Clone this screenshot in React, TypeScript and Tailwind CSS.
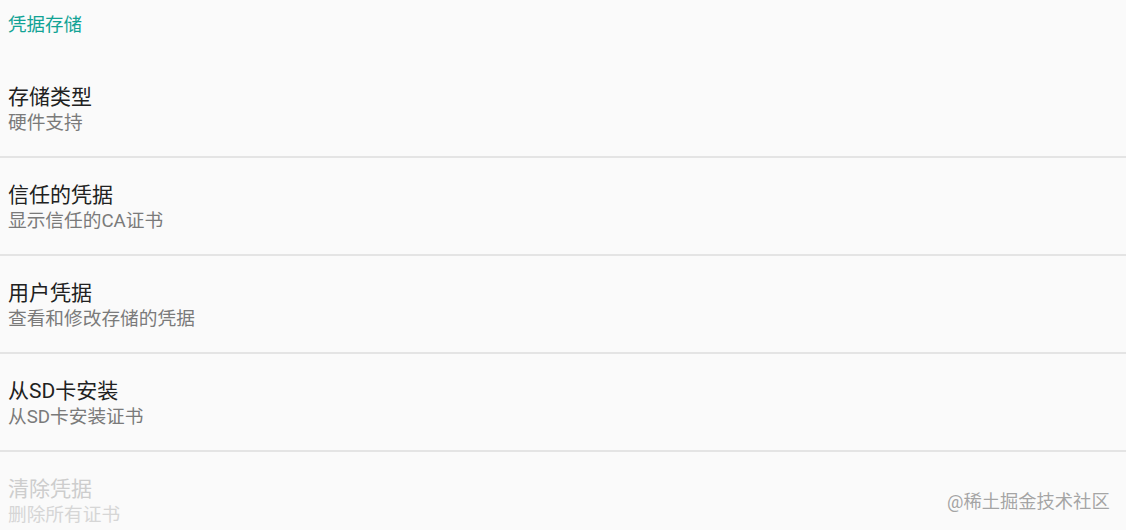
import React from "react";

type Item = { title: string; summary: string; disabled?: boolean };

const items: Item[] = [
  { title: "存储类型", summary: "硬件支持" },
  { title: "信任的凭据", summary: "显示信任的CA证书" },
  { title: "用户凭据", summary: "查看和修改存储的凭据" },
  { title: "从SD卡安装", summary: "从SD卡安装证书" },
  { title: "清除凭据", summary: "删除所有证书", disabled: true },
];

const font = { fontFamily: 'Roboto, "Noto Sans CJK SC", sans-serif' };

const App = () => {
  return (
    <div className="relative h-[530px] w-[1126px] overflow-hidden bg-[#fafafa]" style={font}>
      <div className="h-[60px] pl-2 pt-[13px] text-[18.5px] leading-[24px] text-[#12a395]">
        凭据存储
      </div>
      {items.map((item, i) => (
        <div
          key={item.title}
          className={
            i < items.length - 1
              ? "h-[98px] border-b-2 border-[#e4e4e4] pl-2 pt-[24px]"
              : "h-[98px] pl-2 pt-[24px]"
          }
        >
          <div
            className={
              item.disabled
                ? "text-[21px] leading-[26px] text-[#cdcdcd]"
                : "text-[21px] leading-[26px] text-[#212121]"
            }
          >
            {item.title}
          </div>
          <div
            className={
              item.disabled
                ? "text-[18.7px] leading-[26px] text-[#d6d6d6]"
                : "text-[18.7px] leading-[26px] text-[#7a7a7a]"
            }
          >
            {item.summary}
          </div>
        </div>
      ))}
      <div className="absolute left-[947px] top-[489px] text-[18.3px] leading-[26px] text-[#a5a5a5] [text-shadow:0_0_2px_#fff,0_0_1px_#fff]">
        @稀土掘金技术社区
      </div>
    </div>
  );
};

export default App;
